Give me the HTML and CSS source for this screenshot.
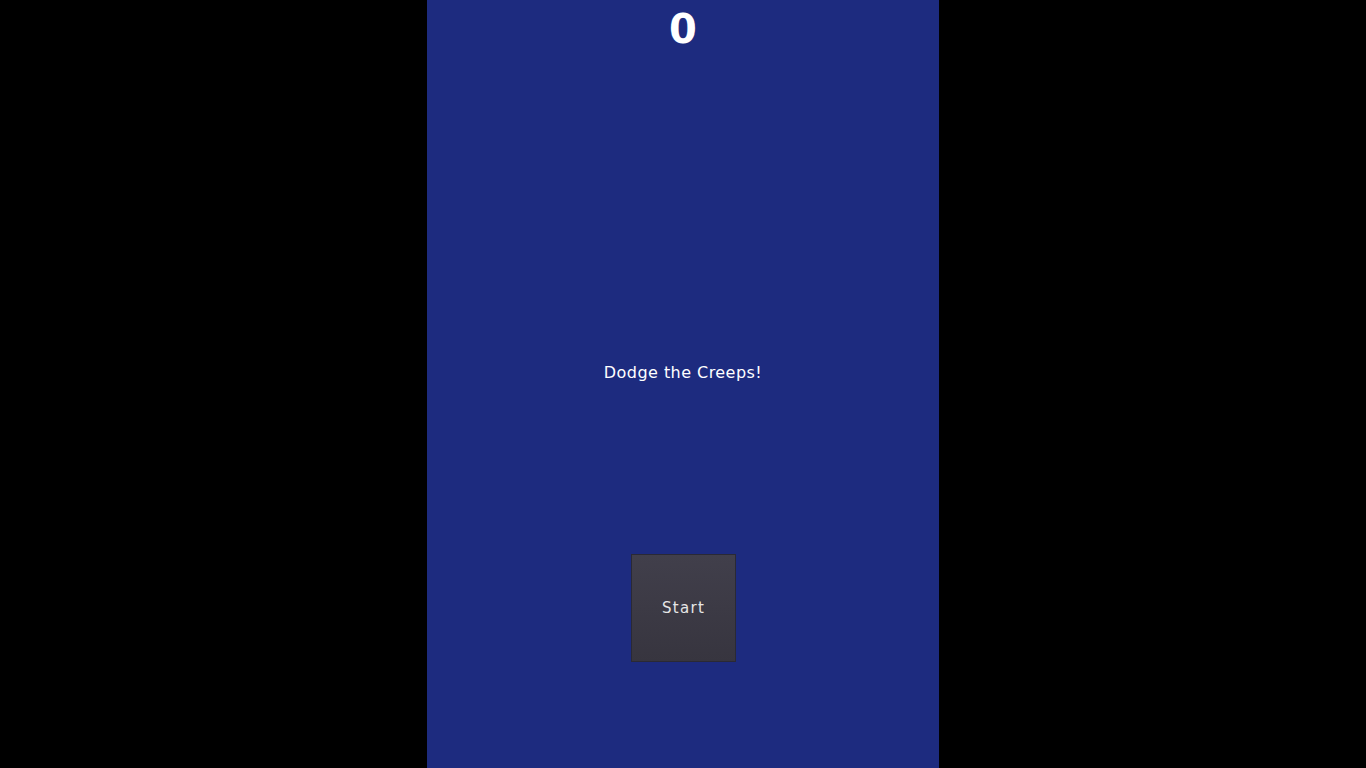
FILE: index.html
```html
<!DOCTYPE html>
<html>
<head>
<meta charset="utf-8">
<link rel="stylesheet" href="styles.css">
</head>
<body>
<main class="stage">
  <div class="score">0</div>
  <div class="message">Dodge the Creeps!</div>
  <button class="start">Start</button>
</main>
</body>
</html>
```
FILE: styles.css
```css
html, body {
  margin: 0;
  height: 100%;
  background: #000;
}
body {
  display: flex;
  justify-content: center;
}
.stage {
  width: 512px;
  height: 768px;
  background: #1d2b7f;
  display: flex;
  flex-direction: column;
  align-items: center;
  color: #fff;
  font-family: "DejaVu Sans", sans-serif;
}
.score {
  margin-top: 7px;
  font-size: 40px;
  font-weight: bold;
  line-height: 44px;
  height: 44px;
}
.message {
  margin-top: 312px;
  font-size: 16px;
  line-height: 20px;
  letter-spacing: 0.45px;
}
.start {
  margin-top: 171px;
  width: 105px;
  height: 108px;
  box-sizing: border-box;
  border: 1px solid #2a2935;
  background: linear-gradient(#413f4b, #37353f);
  color: #e6e6e6;
  font-family: "DejaVu Sans", sans-serif;
  font-size: 15px;
  letter-spacing: 1.3px;
  padding: 0 0 0 1px;
}
```
